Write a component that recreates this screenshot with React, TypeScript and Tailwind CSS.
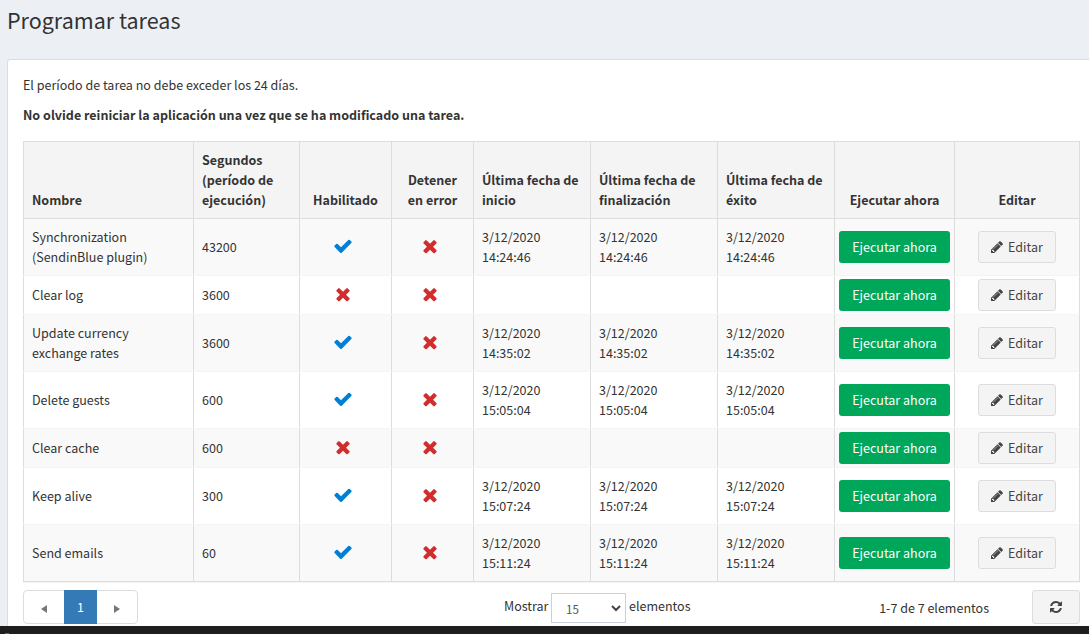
import type { ReactNode } from "react";

const COLS = "grid grid-cols-[170px_106px_92px_82px_117px_127px_117px_120px_125px] w-[1057px]";

function Icon({ d, className }: { d: string; className: string }) {
  return (
    <svg viewBox="0 0 1792 1792" fill="currentColor" className={className} aria-hidden="true">
      <path d={d} />
    </svg>
  );
}

const CHECK =
  "M1671 566q0 40-28 68l-724 724-136 136q-28 28-68 28t-68-28l-136-136-362-362q-28-28-28-68t28-68l136-136q28-28 68-28t68 28l294 295 656-657q28-28 68-28t68 28l136 136q28 28 28 68z";
const TIMES =
  "M1490 1322q0 40-28 68l-136 136q-28 28-68 28t-68-28l-294-294-294 294q-28 28-68 28t-68-28l-136-136q-28-28-28-68t28-68l294-294-294-294q-28-28-28-68t28-68l136-136q28-28 68-28t68 28l294 294 294-294q28-28 68-28t68 28l136 136q28 28 28 68t-28 68l-294 294 294 294q28 28 28 68z";
const PENCIL =
  "M491 1536l91-91-235-235-91 91v107h128v128h107zm523-928q0-22-22-22-10 0-17 7l-542 542q-7 7-7 17 0 22 22 22 10 0 17-7l542-542q7-7 7-17zm-54-192l416 416-832 832h-416v-416zm683 96q0 53-37 90l-166 166-416-416 166-165q36-38 90-38 53 0 91 38l235 234q37 39 37 91z";
const REFRESH =
  "M1639 1056q0 5-1 7-64 268-268 434.5t-478 166.5q-146 0-282.5-55t-243.5-157l-129 129q-19 19-45 19t-45-19-19-45v-448q0-26 19-45t45-19h448q26 0 45 19t19 45-19 45l-137 137q71 66 161 102t187 36q134 0 250-65t186-179q11-17 53-117 8-23 30-23h192q13 0 22.5 9.5t9.5 22.5zm25-800v448q0 26-19 45t-45 19h-448q-26 0-45-19t-19-45 19-45l138-138q-148-137-349-137-134 0-250 65t-186 179q-11 17-53 117-8 23-30 23h-199q-13 0-22.5-9.5t-9.5-22.5v-7q65-268 270-434.5t480-166.5q146 0 284 55.5t245 156.5l130-129q19-19 45-19t45 19 19 45z";

function Flag({ on }: { on: boolean }) {
  return on ? (
    <Icon d={CHECK} className="size-5 text-[#007fd4]" />
  ) : (
    <Icon d={TIMES} className="size-5 text-[#d22d2d]" />
  );
}

function Head({ children, center }: { children: ReactNode; center?: boolean }) {
  return (
    <div
      className={
        "flex items-end border-l border-[#ddd] px-2 pb-2 font-bold " +
        (center ? "justify-center text-center" : "")
      }
    >
      <span>{children}</span>
    </div>
  );
}

function Cell({ children, center }: { children?: ReactNode; center?: boolean }) {
  return (
    <div
      className={
        "flex items-center border-l border-[#ddd] " + (center ? "justify-center" : "px-2")
      }
    >
      {children}
    </div>
  );
}

type Task = { name: ReactNode; seconds: number; enabled: boolean; time?: string };

const tasks: Task[] = [
  { name: <>Synchronization<br />(SendinBlue plugin)</>, seconds: 43200, enabled: true, time: "14:24:46" },
  { name: "Clear log", seconds: 3600, enabled: false },
  { name: <>Update currency<br />exchange rates</>, seconds: 3600, enabled: true, time: "14:35:02" },
  { name: "Delete guests", seconds: 600, enabled: true, time: "15:05:04" },
  { name: "Clear cache", seconds: 600, enabled: false },
  { name: "Keep alive", seconds: 300, enabled: true, time: "15:07:24" },
  { name: "Send emails", seconds: 60, enabled: true, time: "15:11:24" },
];

function DateCell({ time }: { time?: string }) {
  return (
    <Cell>
      {time && (
        <span>
          3/12/2020
          <br />
          {time}
        </span>
      )}
    </Cell>
  );
}

function TaskRow({ task, index }: { task: Task; index: number }) {
  const last = index === tasks.length - 1;
  return (
    <div
      className={
        COLS +
        " border-r border-b border-r-[#ddd] " +
        (task.time ? "h-[57px] " : "h-[39px] ") +
        (index % 2 === 0 ? "bg-[#f9f9f9] " : "bg-white ") +
        (last ? "border-b-[#ddd]" : "border-b-[#f4f4f4]")
      }
    >
      <Cell>
        <span>{task.name}</span>
      </Cell>
      <Cell>{task.seconds}</Cell>
      <Cell center>
        <span className="mr-[5px] mb-[2px]">
          <Flag on={task.enabled} />
        </span>
      </Cell>
      <Cell center>
        <span className="mr-[5px] mb-[2px]">
          <Flag on={false} />
        </span>
      </Cell>
      <DateCell time={task.time} />
      <DateCell time={task.time} />
      <DateCell time={task.time} />
      <Cell center>
        <button className="h-8 w-[111px] rounded-[3px] bg-[#00a65a] text-white">
          Ejecutar ahora
        </button>
      </Cell>
      <Cell center>
        <button className="flex h-8 w-[78px] items-center justify-center gap-1 rounded-[3px] border border-[#ddd] bg-[#f4f4f4] pr-px text-[#444]">
          <Icon d={PENCIL} className="size-[14px]" />
          Editar
        </button>
      </Cell>
    </div>
  );
}

export default function App() {
  return (
    <div className="flex h-[634px] w-[1089px] flex-col overflow-hidden bg-[#ecf0f5] font-['Noto_Sans_CJK_SC','Noto_Sans',sans-serif] text-[12.53px] leading-5 text-[#333]">
      <h1 className="h-[59px] shrink-0 pt-[7px] pl-[7px] text-[21.5px] leading-[26px]">
        Programar tareas
      </h1>
      <main className="ml-[7px] h-[567px] w-[1100px] shrink-0 rounded-tl-[3px] border-t border-l border-[#ddd] bg-white pl-[15px]">
        <p className="pt-[15px]">El período de tarea no debe exceder los 24 días.</p>
        <p className="pt-[10px] font-bold">
          No olvide reiniciar la aplicación una vez que se ha modificado una tarea.
        </p>
        <div className="mt-4 w-[1057px] border-b border-[#f4f4f4]">
          <div className={COLS + " h-[78px] border-t border-r border-b border-[#ddd] bg-[#f4f4f4]"}>
            <Head>Nombre</Head>
            <Head>
              Segundos
              <br />
              (período de
              <br />
              ejecución)
            </Head>
            <Head center>Habilitado</Head>
            <Head center>
              Detener
              <br />
              en error
            </Head>
            <Head>
              Última fecha de
              <br />
              inicio
            </Head>
            <Head>
              Última fecha de
              <br />
              finalización
            </Head>
            <Head>
              Última fecha de
              <br />
              éxito
            </Head>
            <Head center>Ejecutar ahora</Head>
            <Head center>Editar</Head>
          </div>
          {tasks.map((task, i) => (
            <TaskRow key={i} task={task} index={i} />
          ))}
        </div>
        <footer className="mt-[7px] flex w-[1057px] items-start">
          <nav className="flex h-[34px] w-[115px] rounded-[4px] border border-[#ddd]">
            <button className="flex w-10 items-center justify-center pt-1" aria-label="Anterior">
              <svg viewBox="0 0 6 8" className="h-2 w-[6px] fill-[#777]">
                <path d="M6 0v8L0 4z" />
              </svg>
            </button>
            <button className="-my-px h-[34px] w-[33px] bg-[#337ab7] text-white">1</button>
            <button className="flex w-10 items-center justify-center pt-1" aria-label="Siguiente">
              <svg viewBox="0 0 6 8" className="h-2 w-[6px] fill-[#777]">
                <path d="M0 0v8l6-4z" />
              </svg>
            </button>
          </nav>
          <div className="ml-[366px] flex items-start">
            <span className="w-[47px] pt-[6px]">Mostrar</span>
            <div className="mt-[3px] flex h-[30px] w-[75px] items-center justify-between border border-[#ccd0da] pr-1 pl-[14px] text-[11.6px] text-[#555]">
              <span className="pt-px">15</span>
              <svg viewBox="0 0 10 7" className="h-[7px] w-[10px] fill-none stroke-[#444] stroke-2">
                <path d="M1 1l4 4 4-4" />
              </svg>
            </div>
            <span className="pt-[6px] pl-[3px]">elementos</span>
          </div>
          <span className="ml-auto pt-[8px] pr-[43px]">1-7 de 7 elementos</span>
          <button
            className="flex h-[34px] w-12 items-center justify-center rounded-[3px] border border-[#ddd] bg-[#f4f4f4] text-[#444]"
            aria-label="Actualizar"
          >
            <Icon d={REFRESH} className="size-[14px]" />
          </button>
        </footer>
      </main>
      <div className="flex h-2 shrink-0 items-end bg-[#1e1e1e] pl-[5px]">
        <span className="h-px w-1 bg-[#2b7fa8]" />
      </div>
    </div>
  );
}
